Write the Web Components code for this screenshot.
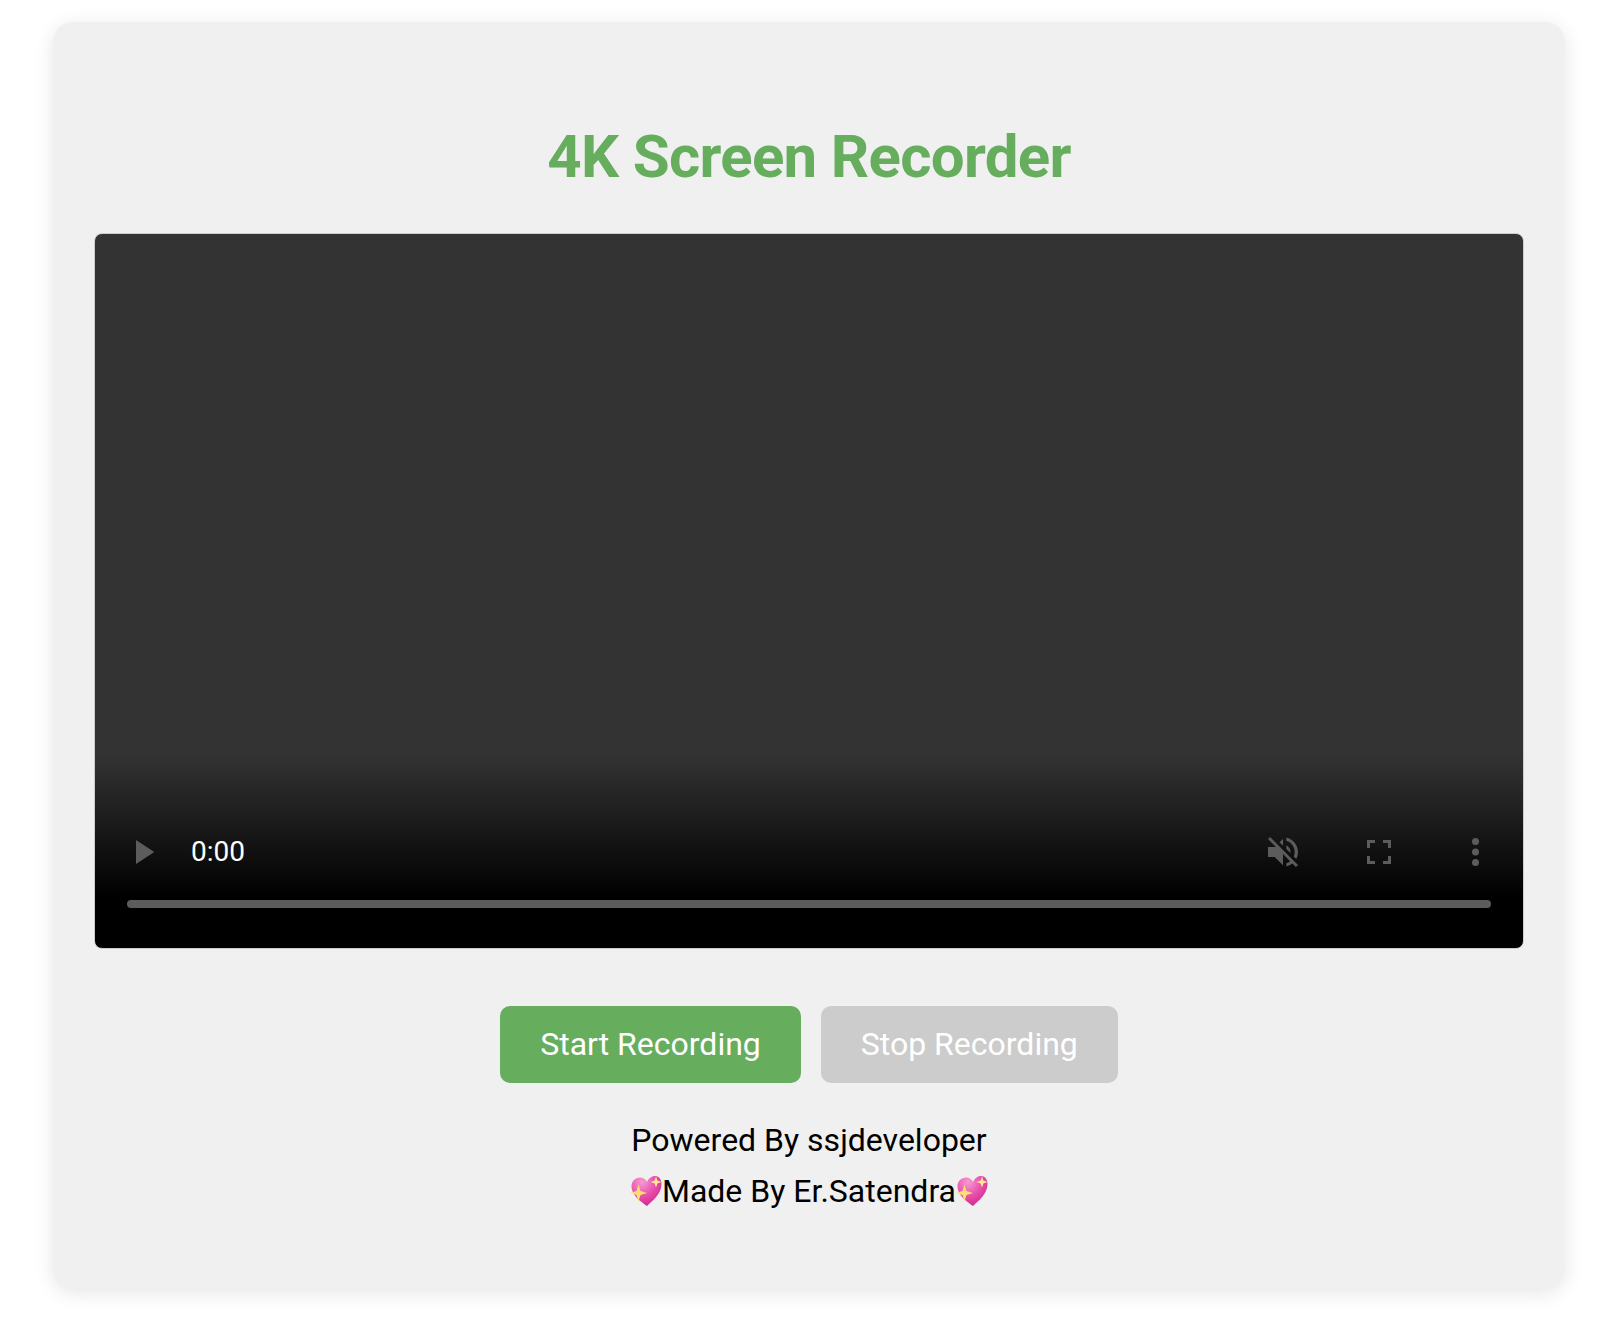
<!DOCTYPE html>
<html lang="en">
<head>
<meta charset="utf-8">
<title>4K Screen Recorder</title>
<style>
    html, body { margin: 0; background: #fff; }
    body {
        display: flow-root;
        min-height: 1322px;
        font-family: Roboto, "Liberation Sans", sans-serif;
    }
</style>
</head>
<body>
<screen-recorder>
    <span slot="title">4K Screen Recorder</span>
    <video-player slot="video"></video-player>
    <record-button slot="actions" variant="start">Start Recording</record-button>
    <record-button slot="actions" variant="stop">Stop Recording</record-button>
    <div slot="credits">Powered By ssjdeveloper</div>
    <div slot="credits"><sparkle-heart></sparkle-heart>Made By Er.Satendra<sparkle-heart></sparkle-heart></div>
</screen-recorder>

<script>
class ScreenRecorder extends HTMLElement {
    constructor() {
        super();
        this.attachShadow({ mode: 'open' });
        this.shadowRoot.innerHTML = `
            <style>
                :host {
                    display: block;
                    box-sizing: border-box;
                    width: 1512px;
                    height: 1267px;
                    margin: 22px 0 0 53px;
                    padding: 100px 41px 0 41px;
                    background: #f0f0f0;
                    border-radius: 20px;
                    box-shadow: 0 4px 20px rgba(0, 0, 0, 0.1);
                }
                h1 {
                    margin: 0 0 41px;
                    text-align: center;
                    font-size: 60px;
                    line-height: 70px;
                    font-weight: 700;
                    letter-spacing: -0.7px;
                    color: #66ad5e;
                }
                .actions {
                    display: flex;
                    justify-content: center;
                    gap: 20px;
                    margin-top: 57px;
                }
                .credits {
                    margin-top: 32px;
                    text-align: center;
                    font-size: 32px;
                    line-height: 51px;
                    color: #000;
                }
            </style>
            <h1><slot name="title"></slot></h1>
            <slot name="video"></slot>
            <div class="actions"><slot name="actions"></slot></div>
            <div class="credits"><slot name="credits"></slot></div>
        `;
    }
}

class VideoPlayer extends HTMLElement {
    constructor() {
        super();
        this.attachShadow({ mode: 'open' });
        this.shadowRoot.innerHTML = `
            <style>
                :host {
                    display: flex;
                    flex-direction: column;
                    justify-content: flex-end;
                    box-sizing: border-box;
                    height: 716px;
                    border: 1px solid #ccc;
                    border-radius: 8px;
                    overflow: hidden;
                    background: linear-gradient(to bottom, #333 0, #333 73%, #000 93%, #000 100%);
                }
                .controls {
                    display: flex;
                    align-items: center;
                    height: 48px;
                    padding: 0 44px 0 32px;
                    margin-bottom: 24px;
                }
                .time {
                    margin-left: 36px;
                    color: #fff;
                    font-size: 28px;
                    line-height: 48px;
                }
                .spacer { flex: 1; }
                svg { display: block; fill: #5c5c5c; }
                .play { width: 28px; height: 28px; }
                .mute { width: 40px; height: 40px; }
                .full { width: 24px; height: 24px; margin-left: 64px; }
                .more { width: 7px; height: 28px; margin-left: 81px; }
                .track {
                    height: 8px;
                    margin: 0 32px 40px;
                    border-radius: 4px;
                    background: #5c5c5c;
                }
            </style>
            <div class="controls">
                <svg class="play" viewBox="0 0 28 28"><path d="M9 2 27.300 14 9 26z"/></svg>
                <span class="time">0:00</span>
                <span class="spacer"></span>
                <svg class="mute" viewBox="0 0 24 24"><path d="M16.5 12c0-1.77-1-3.29-2.5-4.03v2.21l2.45 2.45c.03-.2.05-.41.05-.63zm2.5 0c0 .94-.2 1.82-.54 2.64l1.51 1.51A8.8 8.8 0 0 0 21 12c0-4.28-2.99-7.86-7-8.77v2.06c2.89.86 5 3.54 5 6.71zM4.27 3 3 4.27 7.73 9H3v6h4l5 5v-6.73l4.25 4.25c-.67.52-1.42.93-2.25 1.18v2.06a8.9 8.9 0 0 0 3.69-1.81L19.73 21 21 19.73l-9-9L4.27 3zM12 4 9.91 6.09 12 8.18V4z"/></svg>
                <svg class="full" viewBox="0 0 24 24"><path d="M0 0h8v3H3v5H0zM16 0h8v8h-3V3h-5zM0 16h3v5h5v3H0zM21 16h3v8h-8v-3h5z"/></svg>
                <svg class="more" viewBox="0 0 7 28"><circle cx="3.500" cy="3.500" r="3.500"/><circle cx="3.500" cy="14" r="3.500"/><circle cx="3.500" cy="24.500" r="3.500"/></svg>
            </div>
            <div class="track"></div>
        `;
    }
}

class RecordButton extends HTMLElement {
    constructor() {
        super();
        this.attachShadow({ mode: 'open' });
        this.shadowRoot.innerHTML = `
            <style>
                :host {
                    display: block;
                    box-sizing: border-box;
                    height: 77px;
                    padding: 0 40px;
                    border-radius: 10px;
                    color: #fff;
                    font-size: 32px;
                    line-height: 77px;
                    background: #66ad5e;
                }
                :host([variant="stop"]) { background: #ccc; }
            </style>
            <slot></slot>
        `;
    }
}

class SparkleHeart extends HTMLElement {
    constructor() {
        super();
        this.attachShadow({ mode: 'open' });
        this.shadowRoot.innerHTML = `
            <style>
                :host {
                    display: inline-block;
                    width: 32px;
                    height: 32px;
                    vertical-align: -5px;
                }
                svg { display: block; width: 100%; height: 100%; overflow: visible; }
            </style>
            <svg viewBox="0 0 32 32">
                <defs>
                    <radialGradient id="h" cx="0.35" cy="0.2" r="0.9">
                        <stop offset="0" stop-color="#f79ad2"/>
                        <stop offset="0.5" stop-color="#e950ac"/>
                        <stop offset="1" stop-color="#c9238a"/>
                    </radialGradient>
                </defs>
                <path fill="url(#h)" d="M17 31C11.500 27 1.500 20.500 1.500 11.500 1.500 6 5.500 2.500 10 2.500c3 0 5.500 1.500 7 4.500 1.500-3.500 4.500-6 8-6 4 0 6.500 3.500 6.500 8C31.500 18.500 23 25.500 17 31z"/>
                <path fill="#ffe070" d="M8.500 9.500 10.500 16 17 18l-6.500 2-2 6.500-2-6.500L0 18l6.500-2z"/>
                <path fill="#ffe88f" d="M26 1.500l1.400 4.100L31.500 7l-4.100 1.400L26 12.500l-1.400-4.100L20.500 7l4.100-1.400z"/>
            </svg>
        `;
    }
}

customElements.define('screen-recorder', ScreenRecorder);
customElements.define('video-player', VideoPlayer);
customElements.define('record-button', RecordButton);
customElements.define('sparkle-heart', SparkleHeart);
</script>
</body>
</html>
